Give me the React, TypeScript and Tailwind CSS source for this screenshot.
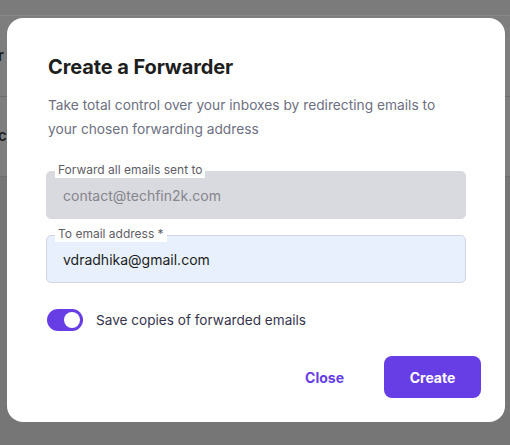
import React from "react";

function Field({
  label,
  value,
  variant,
}: {
  label: string;
  value: string;
  variant: "disabled" | "filled";
}) {
  const box =
    variant === "disabled"
      ? "bg-[#d9dadf] border-[#d9dadf] text-[#85858c]"
      : "bg-[#e8f0fe] border-[#d2d6e0] text-[#1d1e20]";
  return (
    <div className="relative">
      <div
        className={`h-[48px] w-[420px] rounded-[5px] border flex items-center pl-[16px] text-[14px] ${box}`}
      >
        {value}
      </div>
      <span className="absolute left-[9px] top-[-9px] bg-white px-[3px] rounded-t-[3px] text-[12px] leading-[16px] text-[#5e5e66]">
        {label}
      </span>
    </div>
  );
}

export default function App() {
  return (
    <div
      className="relative w-[510px] h-[445px] overflow-hidden bg-[#767677]"
      style={{ fontFamily: "Inter, 'Noto Sans', sans-serif" }}
    >
      {/* page behind the overlay */}
      <div className="h-[16px] bg-[#7b7b7b] border-b border-[#888]" />
      <div className="h-[81px] border-b border-[#6e6e6e] bg-[#7e7e7e] flex items-center">
        <span className="ml-[-2px] text-[15px] font-semibold text-[#1e1e1e]">r</span>
      </div>
      <div className="h-[80px] border-b border-[#6e6e6e] bg-[#7e7e7e] flex items-center">
        <span className="ml-[-2px] text-[15px] font-semibold text-[#1e1e1e]">c</span>
      </div>

      {/* dialog */}
      <div className="absolute left-[7px] top-[18px] w-[498px] h-[404px] bg-white rounded-[16px] pl-[39px] pr-[39px] pt-[35px]">
        <h2 className="ml-[2px] text-[20px] leading-[28px] font-bold text-[#1d1e20] tracking-[-0.1px]">
          Create a Forwarder
        </h2>
        <p className="ml-[2px] mt-[12px] text-[13.75px] leading-[24px] text-[#6d7081]">
          Take total control over your inboxes by redirecting emails to
          <br />
          your chosen forwarding address
        </p>

        <div className="mt-[30px] flex flex-col gap-[16px]">
          <Field label="Forward all emails sent to" value="contact@techfin2k.com" variant="disabled" />
          <Field label="To email address *" value="vdradhika@gmail.com" variant="filled" />
        </div>

        <div className="mt-[26px] flex items-center gap-[12px] ml-[1px]">
          <div className="w-[36px] h-[22px] rounded-full bg-[#673de6] flex items-center justify-end pr-[3px]">
            <div className="w-[16px] h-[16px] rounded-full bg-white" />
          </div>
          <span className="ml-[1px] text-[13.6px] text-[#36344d]">Save copies of forwarded emails</span>
        </div>

        <div className="mt-[25px] flex justify-end items-center gap-[16px] mr-[-15px]">
          <button className="h-[42px] px-[24px] text-[14px] font-bold text-[#673de6]">Close</button>
          <button className="h-[42px] w-[97px] rounded-[8px] bg-[#673de6] text-[14px] font-bold text-white">
            Create
          </button>
        </div>
      </div>
    </div>
  );
}
